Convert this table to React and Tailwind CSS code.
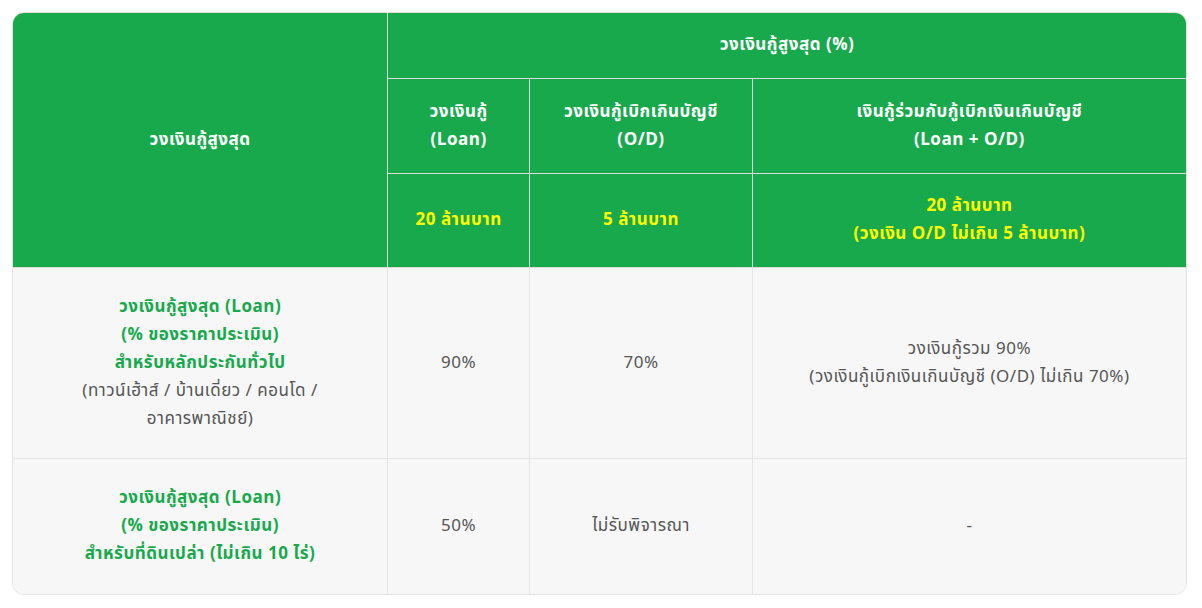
import React from 'react';

const FONT = "font-['Noto_Sans_Thai','Noto_Sans','Liberation_Sans',sans-serif]";

const headCell = 'border border-[#dcdcdc] px-4 py-[18px] text-center align-middle font-bold text-white';
const bodyCell = 'border border-[#e5e5e5] px-4 py-[24px] text-center align-middle text-[#555555]';

const App = () => {
  return (
    <div className={`bg-white p-3 ${FONT}`}>
      <div className="w-[1175px] overflow-hidden rounded-xl border border-[#e2e2e2]">
        <table className="w-full border-collapse border-hidden text-[17px] leading-[28px] tracking-[0.03em]">
          <colgroup>
            <col className="w-[375px]" />
            <col className="w-[142px]" />
            <col className="w-[223px]" />
            <col className="w-[434px]" />
          </colgroup>
          <thead className="bg-[#18a94d]">
            <tr>
              <th rowSpan={3} className={headCell}>วงเงินกู้สูงสุด</th>
              <th colSpan={3} className={`${headCell} h-[65px]`}>วงเงินกู้สูงสุด (%)</th>
            </tr>
            <tr>
              <th className={`${headCell} h-[95px]`}>วงเงินกู้<br />(Loan)</th>
              <th className={headCell}>วงเงินกู้เบิกเกินบัญชี<br />(O/D)</th>
              <th className={headCell}>เงินกู้ร่วมกับกู้เบิกเงินเกินบัญชี<br />(Loan + O/D)</th>
            </tr>
            <tr>
              <th className={`${headCell} h-[94px] !text-[#ffff00]`}>20 ล้านบาท</th>
              <th className={`${headCell} !text-[#ffff00]`}>5 ล้านบาท</th>
              <th className={`${headCell} !text-[#ffff00]`}>20 ล้านบาท<br />(วงเงิน O/D ไม่เกิน 5 ล้านบาท)</th>
            </tr>
          </thead>
          <tbody className="bg-[#f7f7f7]">
            <tr>
              <td className={`${bodyCell} h-[191px]`}>
                <div className="font-bold text-[#18a94d]">
                  วงเงินกู้สูงสุด (Loan)<br />(% ของราคาประเมิน)<br />สำหรับหลักประกันทั่วไป
                </div>
                <div>(ทาวน์เฮ้าส์ / บ้านเดี่ยว / คอนโด /<br />อาคารพาณิชย์)</div>
              </td>
              <td className={bodyCell}>90%</td>
              <td className={bodyCell}>70%</td>
              <td className={bodyCell}>
                วงเงินกู้รวม 90%<br />(วงเงินกู้เบิกเงินเกินบัญชี (O/D) ไม่เกิน 70%)
              </td>
            </tr>
            <tr>
              <td className={`${bodyCell} h-[136px]`}>
                <div className="font-bold text-[#18a94d]">
                  วงเงินกู้สูงสุด (Loan)<br />(% ของราคาประเมิน)<br />สำหรับที่ดินเปล่า (ไม่เกิน 10 ไร่)
                </div>
              </td>
              <td className={bodyCell}>50%</td>
              <td className={bodyCell}>ไม่รับพิจารณา</td>
              <td className={bodyCell}>-</td>
            </tr>
          </tbody>
        </table>
      </div>
    </div>
  );
};

export default App;
